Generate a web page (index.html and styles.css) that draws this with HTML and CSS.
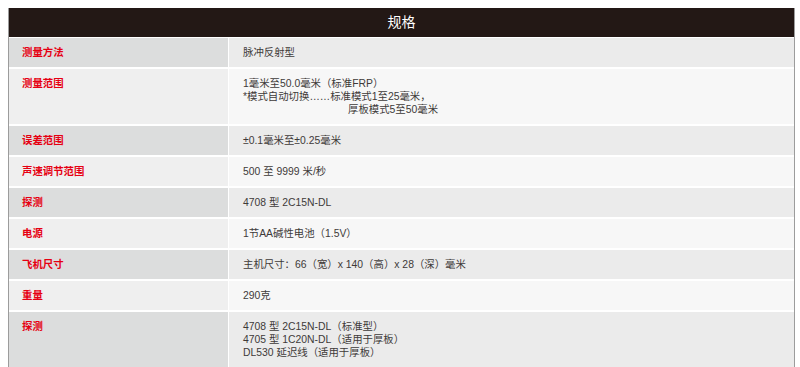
FILE: index.html
```html
<!DOCTYPE html>
<html lang="zh-CN">
<head>
<meta charset="utf-8">
<title>规格</title>
<link rel="stylesheet" href="styles.css">
</head>
<body>
<div class="spec">
  <div class="spec-title">规格</div>
  <div class="spec-grid">
    <div class="lbl odd">测量方法</div>
    <div class="val odd">脉冲反射型</div>

    <div class="lbl even">测量范围</div>
    <div class="val even">1毫米至50.0毫米（标准FRP）<br>*模式自动切换……标准模式1至25毫米，<span class="indent">厚板模式5至50毫米</span></div>

    <div class="lbl odd">误差范围</div>
    <div class="val odd">±0.1毫米至±0.25毫米</div>

    <div class="lbl even">声速调节范围</div>
    <div class="val even">500 至 9999 米/秒</div>

    <div class="lbl odd">探测</div>
    <div class="val odd">4708 型 2C15N-DL</div>

    <div class="lbl even">电源</div>
    <div class="val even">1节AA碱性电池（1.5V）</div>

    <div class="lbl odd">飞机尺寸</div>
    <div class="val odd">主机尺寸：66（宽）x 140（高）x 28（深）毫米</div>

    <div class="lbl even">重量</div>
    <div class="val even">290克</div>

    <div class="lbl odd">探测</div>
    <div class="val odd">4708 型 2C15N-DL（标准型）<br>4705 型 1C20N-DL（适用于厚板）<br>DL530 延迟线（适用于厚板）</div>
  </div>
</div>
</body>
</html>
```

FILE: styles.css
```css
html, body {
  margin: 0;
  padding: 0;
  background: #ffffff;
}
body {
  padding: 8px 0 0 8px;
  font-family: "Liberation Sans", "Noto Sans CJK SC", sans-serif;
  font-size: 10.4px;
  line-height: 13px;
  color: #3e3a39;
}
.spec {
  width: 785px;
  border-left: 1px solid #9c9c9c;
  border-right: 1px solid #9c9c9c;
  background: #ffffff;
}
.spec-title {
  height: 29px;
  background: #231815;
  color: #ffffff;
  font-size: 14px;
  line-height: 29px;
  text-align: center;
}
.spec-grid {
  margin-top: 1px;
  display: grid;
  grid-template-columns: 219px 1fr;
  column-gap: 1px;
  row-gap: 2px;
}
.lbl {
  padding: 8px 13px;
  color: #e60012;
  font-weight: bold;
}
.val {
  padding: 8px 14px;
}
.lbl.odd { background: #dcdddd; }
.val.odd { background: #ebebeb; }
.lbl.even { background: #efefef; }
.val.even { background: #f7f7f7; }
.indent {
  display: block;
  padding-left: 105px;
}
```
